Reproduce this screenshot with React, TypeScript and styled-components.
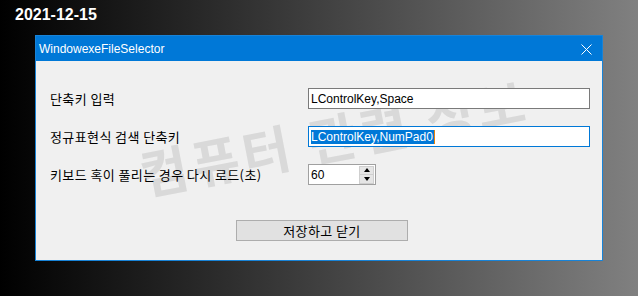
import React from "react";
import styled, { createGlobalStyle } from "styled-components";

const GlobalStyle = createGlobalStyle`
  html, body {
    margin: 0;
    padding: 0;
  }
  body {
    font-family: "Liberation Sans", Arial, sans-serif;
  }
`;

const Page = styled.div`
  width: 638px;
  height: 296px;
  box-sizing: border-box;
  padding: 6px 0 0 15px;
  background: linear-gradient(to right, #000000 0%, #808080 100%);
  overflow: hidden;
`;

const DateLabel = styled.div`
  height: 18px;
  line-height: 18px;
  color: #ffffff;
  font-family: "Liberation Sans", Arial, sans-serif;
  font-weight: bold;
  font-size: 16px;
`;

const Window = styled.div`
  margin: 11px 0 0 20px;
  width: 568px;
  height: 226px;
  box-sizing: border-box;
  border: 1px solid #1883d7;
  display: flex;
  flex-direction: column;
  background: #f0f0f0;
`;

const TitleBar = styled.div`
  height: 25px;
  flex: none;
  background: #0078d7;
  display: flex;
  align-items: center;
  justify-content: space-between;
  padding: 0 10px 0 3px;
  color: #ffffff;
  font-family: "Liberation Sans", Arial, sans-serif;
  font-size: 12px;
`;

const CloseIcon = styled.svg`
  display: block;
  width: 11px;
  height: 11px;
  margin-top: 1px;
`;

const Body = styled.div`
  position: relative;
  flex: 1;
  padding: 27px 12px 0 14px;
  overflow: hidden;
`;

const Watermark = styled.div`
  position: absolute;
  left: 86px;
  top: 49px;
  width: 424px;
  height: 52px;
  line-height: 52px;
  text-align: center;
  transform: rotate(-11deg);
  color: #d9d9d9;
  font-family: "Noto Sans CJK KR", "Noto Sans", sans-serif;
  font-weight: bold;
  font-size: 52px;
  letter-spacing: 4px;
  white-space: nowrap;
  pointer-events: none;
  z-index: 0;
`;

const Form = styled.div`
  position: relative;
  z-index: 1;
  display: grid;
  grid-template-columns: 1fr 282px;
  grid-auto-rows: 21px;
  row-gap: 17px;
  align-items: center;
`;

const Label = styled.div`
  color: #000000;
  font-family: "Noto Sans CJK KR", "Noto Sans", sans-serif;
  font-size: 13px;
  line-height: 15px;
  letter-spacing: 0.4px;
  white-space: nowrap;
  margin-top: -1px;
`;

const TextBox = styled.div<{ $focused?: boolean }>`
  height: 21px;
  box-sizing: border-box;
  background: #ffffff;
  border: 1px solid ${(p) => (p.$focused ? "#0078d7" : "#7a7a7a")};
  display: flex;
  align-items: center;
  padding: 0 2px;
  font-family: "Liberation Sans", Arial, sans-serif;
  font-size: 12px;
  color: #000000;
  white-space: nowrap;
`;

const Selected = styled.span`
  background: #0078d7;
  color: #ffffff;
  line-height: 14px;
  padding-right: 1px;
`;

const Caret = styled.span`
  display: inline-block;
  width: 1px;
  height: 14px;
  background: #e8820c;
`;

const SpinBox = styled.div`
  width: 68px;
  height: 21px;
  box-sizing: border-box;
  background: #ffffff;
  border: 1px solid #a0a0a0;
  display: flex;
  align-items: center;
  justify-content: space-between;
  padding: 0 1px 0 2px;
  font-family: "Liberation Sans", Arial, sans-serif;
  font-size: 12px;
`;

const SpinButtons = styled.div`
  display: flex;
  flex-direction: column;
  width: 15px;
  height: 18px;
`;

const SpinButton = styled.div`
  flex: 1;
  background: #e5e5e5;
  border: 1px solid #cfcfcf;
  display: flex;
  align-items: center;
  justify-content: center;
  & + & {
    border-top: none;
  }
`;

const Arrow = styled.div<{ $down?: boolean }>`
  width: 0;
  height: 0;
  border-left: 3.5px solid transparent;
  border-right: 3.5px solid transparent;
  ${(p) =>
    p.$down ? "border-top: 4px solid #000;" : "border-bottom: 4px solid #000;"}
`;

const ButtonRow = styled.div`
  position: relative;
  z-index: 1;
  display: flex;
  justify-content: center;
  padding-left: 4px;
  margin-top: 35px;
`;

const Button = styled.div`
  width: 172px;
  height: 21px;
  box-sizing: border-box;
  background: #e1e1e1;
  border: 1px solid #adadad;
  display: flex;
  align-items: center;
  justify-content: center;
  font-family: "Noto Sans CJK KR", "Noto Sans", sans-serif;
  font-size: 13px;
  letter-spacing: 0.4px;
  color: #000000;
`;

export default function App() {
  return (
    <>
      <GlobalStyle />
      <Page>
        <DateLabel>2021-12-15</DateLabel>
        <Window>
          <TitleBar>
            <span>WindowexeFileSelector</span>
            <CloseIcon viewBox="0 0 11 11">
              <path d="M0.5 0.5 L10.5 10.5 M10.5 0.5 L0.5 10.5" stroke="#ffffff" strokeWidth="1" />
            </CloseIcon>
          </TitleBar>
          <Body>
            <Watermark>컴퓨터 관련 정보</Watermark>
            <Form>
              <Label>단축키 입력</Label>
              <TextBox>LControlKey,Space</TextBox>
              <Label>정규표현식 검색 단축키</Label>
              <TextBox $focused>
                <Selected>LControlKey,NumPad0</Selected>
                <Caret />
              </TextBox>
              <Label>키보드 혹이 풀리는 경우 다시 로드(초)</Label>
              <SpinBox>
                <span>60</span>
                <SpinButtons>
                  <SpinButton>
                    <Arrow />
                  </SpinButton>
                  <SpinButton>
                    <Arrow $down />
                  </SpinButton>
                </SpinButtons>
              </SpinBox>
            </Form>
            <ButtonRow>
              <Button>저장하고 닫기</Button>
            </ButtonRow>
          </Body>
        </Window>
      </Page>
    </>
  );
}
